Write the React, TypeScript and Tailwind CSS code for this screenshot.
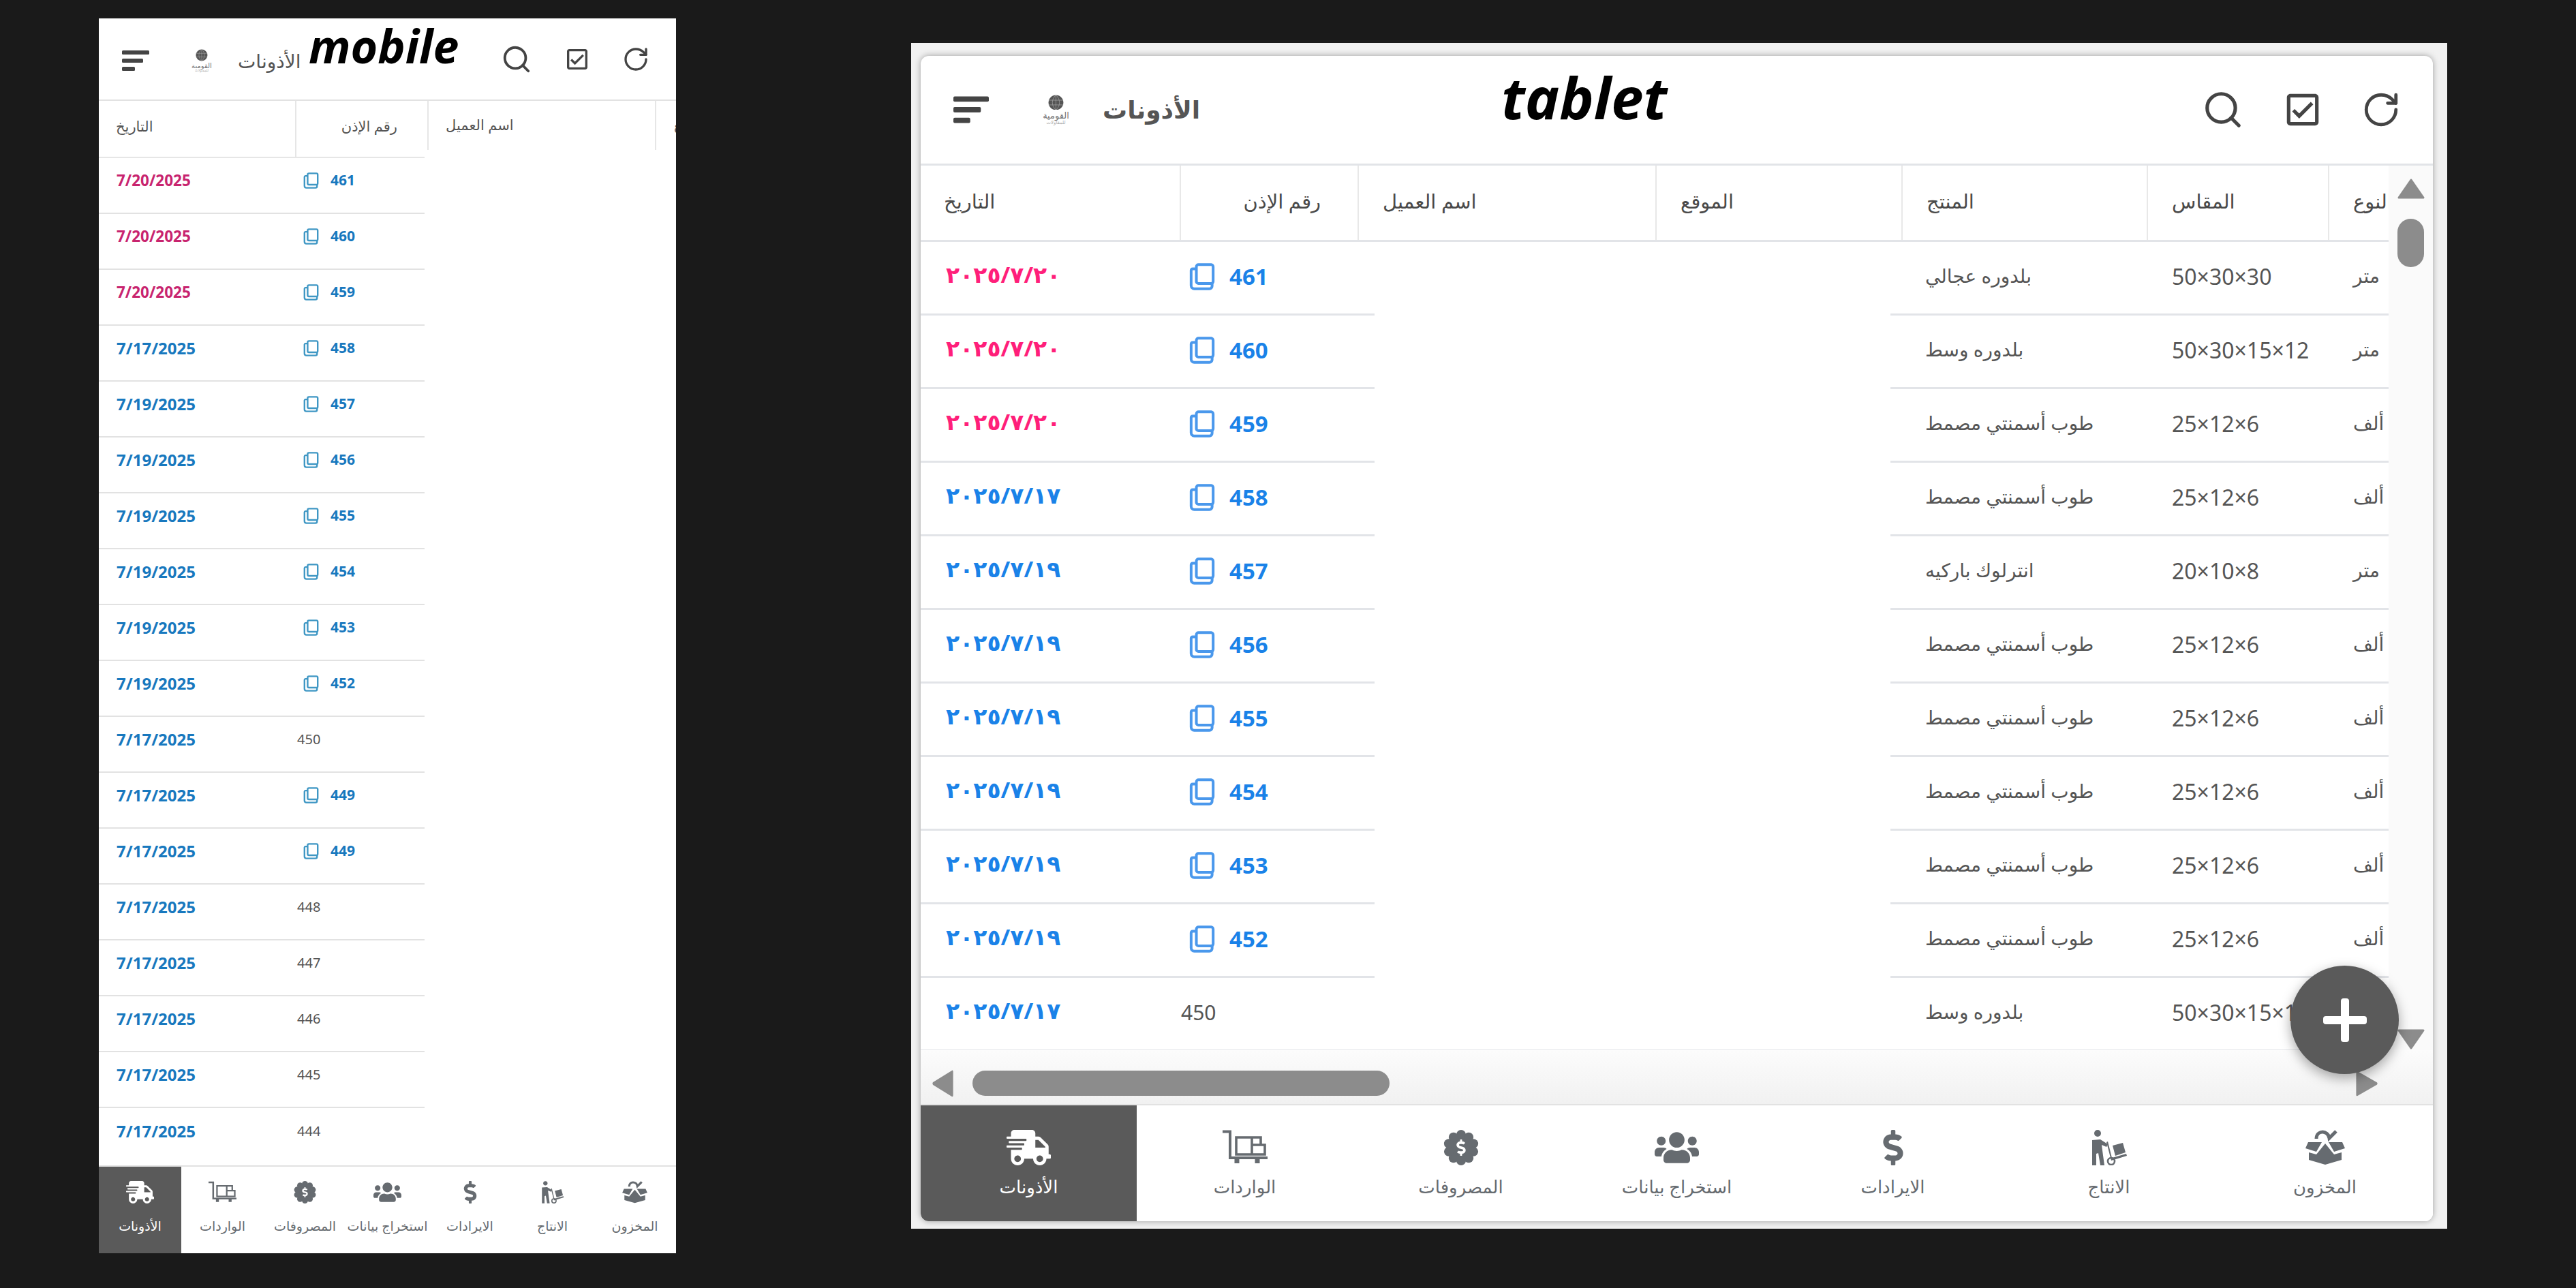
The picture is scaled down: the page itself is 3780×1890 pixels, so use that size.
import React from 'react';
import { RotateCw, Search } from 'lucide-react';
import { FaDollarSign, FaShippingFast, FaUsers } from 'react-icons/fa';
import { MdOutlineCheckBox } from 'react-icons/md';

type Row = { date: string; arDate: string; no: string; copy: boolean; product: string; size: string; unit: string; hot?: boolean };

const solid = 'طوب أسمنتي مصمط';
const mid = 'بلدوره وسط';

const rows: Row[] = [
  { date: '7/20/2025', arDate: '٢٠٢٥/٧/٢٠', no: '461', copy: true, product: 'بلدوره عجالي', size: '50×30×30', unit: 'متر', hot: true },
  { date: '7/20/2025', arDate: '٢٠٢٥/٧/٢٠', no: '460', copy: true, product: mid, size: '50×30×15×12', unit: 'متر', hot: true },
  { date: '7/20/2025', arDate: '٢٠٢٥/٧/٢٠', no: '459', copy: true, product: solid, size: '25×12×6', unit: 'ألف', hot: true },
  { date: '7/17/2025', arDate: '٢٠٢٥/٧/١٧', no: '458', copy: true, product: solid, size: '25×12×6', unit: 'ألف' },
  { date: '7/19/2025', arDate: '٢٠٢٥/٧/١٩', no: '457', copy: true, product: 'انترلوك باركيه', size: '20×10×8', unit: 'متر' },
  { date: '7/19/2025', arDate: '٢٠٢٥/٧/١٩', no: '456', copy: true, product: solid, size: '25×12×6', unit: 'ألف' },
  { date: '7/19/2025', arDate: '٢٠٢٥/٧/١٩', no: '455', copy: true, product: solid, size: '25×12×6', unit: 'ألف' },
  { date: '7/19/2025', arDate: '٢٠٢٥/٧/١٩', no: '454', copy: true, product: solid, size: '25×12×6', unit: 'ألف' },
  { date: '7/19/2025', arDate: '٢٠٢٥/٧/١٩', no: '453', copy: true, product: solid, size: '25×12×6', unit: 'ألف' },
  { date: '7/19/2025', arDate: '٢٠٢٥/٧/١٩', no: '452', copy: true, product: solid, size: '25×12×6', unit: 'ألف' },
  { date: '7/17/2025', arDate: '٢٠٢٥/٧/١٧', no: '450', copy: false, product: mid, size: '50×30×15×12', unit: 'متر' },
];

const mobileExtra: Row[] = [
  { date: '7/17/2025', arDate: '', no: '449', copy: true, product: '', size: '', unit: '' },
  { date: '7/17/2025', arDate: '', no: '449', copy: true, product: '', size: '', unit: '' },
  { date: '7/17/2025', arDate: '', no: '448', copy: false, product: '', size: '', unit: '' },
  { date: '7/17/2025', arDate: '', no: '447', copy: false, product: '', size: '', unit: '' },
  { date: '7/17/2025', arDate: '', no: '446', copy: false, product: '', size: '', unit: '' },
  { date: '7/17/2025', arDate: '', no: '445', copy: false, product: '', size: '', unit: '' },
  { date: '7/17/2025', arDate: '', no: '444', copy: false, product: '', size: '', unit: '' },
];

const CopyIcon = ({ className }: { className: string }) => (
  <svg viewBox="0 0 24 26" fill="none" stroke="currentColor" strokeWidth="2.6" className={className}>
    <rect x="6.5" y="1.5" width="16" height="18" rx="2" />
    <path d="M6.5 5.5H3A1.6 1.6 0 0 0 1.5 7v14.5A3 3 0 0 0 4.5 24.5H19a2.5 2.5 0 0 0 2.5-2.5v-2.5" />
  </svg>
);

const MenuIcon = ({ className }: { className: string }) => (
  <svg viewBox="0 0 40 30" fill="#444" className={className}>
    <rect width="40" height="6" rx="1.5" />
    <rect y="12" width="31" height="6" rx="1.5" />
    <rect y="24" width="19" height="6" rx="1.5" />
  </svg>
);

const Logo = ({ className, textClass, subClass }: { className: string; textClass: string; subClass: string }) => (
  <div className={`flex flex-col items-center ${className}`}>
    <svg viewBox="0 0 20 20" fill="none" className="w-[56%]">
      <circle cx="10" cy="10" r="9.5" fill="#555" />
      <path d="M0.5 7h19M0.5 13h19M10 0.5v19M10 .5c-6 5-6 14 0 19M10 .5c6 5 6 14 0 19" stroke="#bbb" strokeWidth=".5" />
    </svg>
    <span className={`whitespace-nowrap leading-none text-[#777] ${textClass}`}>القومية</span>
    <span className={`whitespace-nowrap leading-none text-[#aaa] ${subClass}`}>للمقاولات</span>
  </div>
);

const CartIcon = ({ className }: { className: string }) => (
  <svg viewBox="0 0 66 52" className={className} fill="none" stroke="currentColor" strokeWidth="3.6">
    <path d="M0 2.5h11v38.5h55" strokeWidth="4" />
    <path d="M20 11h23v25H20zM43 11h13v11H43zM43 22h19v14H43z" />
    <path d="M21 43v6M51 43v6" strokeWidth="7" />
  </svg>
);

const CarryIcon = ({ className }: { className: string }) => (
  <svg viewBox="0 0 54 52" className={className} fill="currentColor">
    <circle cx="10" cy="5" r="5" />
    <path d="M2 15l12-1 11 7-2 4-7-3 1 8 3 22h-6l-3-18-3 1v17H2z" />
    <path d="M32 23l15-4 4 14-15 5z" />
    <path d="M23 18l2-1 6 24 21-6 1 3-23 7z" />
    <circle cx="30" cy="46" r="5" fill="none" stroke="currentColor" strokeWidth="2.6" />
  </svg>
);

const BoxIcon = ({ className }: { className: string }) => (
  <svg viewBox="0 0 60 52" className={className} fill="currentColor">
    <path d="M17 13C17 0 34 0 36 12L46 2" fill="none" stroke="currentColor" strokeWidth="5" />
    <path d="M5 18H25L17 32 1 27zM55 18H35L43 32 59 27z" />
    <path d="M6 33l11 3 13-16 13 16 11-3v11l-24 7-24-7z" />
  </svg>
);

const lobes = Array.from({ length: 10 }, (_, i) => (i * Math.PI) / 5);

const BadgeIcon = ({ className, dollar }: { className: string; dollar: string }) => (
  <div className={`relative flex items-center justify-center ${className}`}>
    <svg viewBox="0 0 52 52" className="h-full w-full" fill="currentColor">
      <circle cx="26" cy="26" r="20" />
      {lobes.map((a) => (
        <circle key={a} cx={26 + 19 * Math.sin(a)} cy={26 - 19 * Math.cos(a)} r="7" />
      ))}
    </svg>
    <FaDollarSign className={`absolute text-white ${dollar}`} />
  </div>
);

const NavIcon = ({ i, compact }: { i: number; compact: boolean }) => {
  if (i === 0) return <FaShippingFast className={compact ? 'h-[33px] w-[41px]' : 'h-[52px] w-[65px]'} />;
  if (i === 1) return <CartIcon className={compact ? 'h-[33px] w-[41px]' : 'h-[52px] w-[66px]'} />;
  if (i === 2) return <BadgeIcon className={compact ? 'h-[33px] w-[33px]' : 'h-[52px] w-[52px]'} dollar={compact ? 'h-[15px] w-[15px]' : 'h-[24px] w-[24px]'} />;
  if (i === 3) return <FaUsers className={compact ? 'h-[33px] w-[41px]' : 'h-[52px] w-[65px]'} />;
  if (i === 4) return <FaDollarSign className={compact ? 'h-[33px] w-[26px]' : 'h-[52px] w-[42px]'} />;
  if (i === 5) return <CarryIcon className={compact ? 'h-[33px] w-[34px]' : 'h-[52px] w-[54px]'} />;
  return <BoxIcon className={compact ? 'h-[33px] w-[39px]' : 'h-[52px] w-[60px]'} />;
};

const navLabels = ['الأذونات', 'الواردات', 'المصروفات', 'استخراج بيانات', 'الايرادات', 'الانتاج', 'المخزون'];

const BottomNav = ({ compact }: { compact: boolean }) => (
  <div className={`flex shrink-0 border-t-2 border-[#e2e2e2] bg-white ${compact ? 'h-[129px]' : 'h-[172px]'}`}>
    {navLabels.map((label, i) => (
      <div
        key={label}
        className={`flex flex-1 flex-col items-center ${compact ? 'gap-[24px] pt-[21px] text-[19px]' : 'gap-[18px] pt-[36px] text-[26px]'} ${i === 0 ? 'bg-[#5a5a5a] text-white' : 'bg-white text-[#666b70]'}`}
      >
        <NavIcon i={i} compact={compact} />
        <span className="whitespace-nowrap leading-none">{label}</span>
      </div>
    ))}
  </div>
);

const MobileView = () => (
  <div className="relative flex h-[1812px] w-[847px] shrink-0 flex-col bg-white">
    <span className="absolute left-[308px] top-0 text-[68px] font-bold italic leading-[80px] text-black">mobile</span>
    <div className="flex h-[121px] shrink-0 items-start justify-between border-b-2 border-[#e2e2e2] pl-[34px] pr-[39px] pt-[37px]">
      <div className="mt-[8px] flex items-center">
        <MenuIcon className="h-[30px] w-[40px]" />
        <Logo className="ml-[61px] w-[32px]" textClass="mt-[1px] text-[10px]" subClass="text-[5px]" />
        <span className="ml-[37px] text-[28px] leading-none text-[#555]">الأذونات</span>
      </div>
      <div className="flex items-center gap-[51px] text-[#444]">
        <Search className="h-[46px] w-[46px]" strokeWidth={2} />
        <MdOutlineCheckBox className="-mx-[5px] h-[40px] w-[40px]" />
        <RotateCw className="h-[40px] w-[40px]" strokeWidth={2} />
      </div>
    </div>
    <div className="flex h-[84px] shrink-0 overflow-hidden text-[21px] text-[#555]">
      <div className="flex w-[290px] shrink-0 items-center border-b-2 border-r-2 border-[#e6e6e6] pb-[6px] pl-[25px]">التاريخ</div>
      <div className="flex w-[188px] shrink-0 items-center justify-end border-b-2 border-[#e6e6e6] pb-[6px] pr-[40px]">رقم الإذن</div>
      <div className="ml-[4px] flex h-[72px] w-[336px] shrink-0 items-center border-x-2 border-[#e6e6e6] pl-[25px]">اسم العميل</div>
      <div className="flex h-[72px] shrink-0 items-center pl-[26px]">الموقع</div>
    </div>
    <div className="flex-1 overflow-hidden">
      {[...rows, ...mobileExtra].map((r, i) => (
        <div key={i} className={`flex h-[82px] w-[478px] pb-[14px] ${i === 17 ? '' : 'border-b-2 border-[#e2e2e2]'}`}>
          <div
            className={`flex w-[290px] shrink-0 items-center pl-[26px] font-bold ${r.hot ? 'text-[22.5px] text-[#c8246f]' : 'text-[24px] text-[#1878be]'}`}
          >
            {r.date}
          </div>
          {r.copy ? (
            <div className="flex items-center pl-[10px] text-[21px] font-bold text-[#1878be]">
              <CopyIcon className="mr-[17px] h-[24px] w-[23px] text-[#3f97c4]" />
              {r.no}
            </div>
          ) : (
            <div className="flex items-center pl-[1px] text-[20px] text-[#555]">{r.no}</div>
          )}
        </div>
      ))}
    </div>
    <BottomNav compact />
  </div>
);

const tabletCols = ['w-[382px]', 'w-[261px]', 'w-[437px]', 'w-[361px]', 'w-[360px]', 'w-[266px]', 'w-[87px]'];
const tabletHeads = ['التاريخ', 'رقم الإذن', 'اسم العميل', 'الموقع', 'المنتج', 'المقاس', 'النوع'];

const Arrow = ({ d, className }: { d: string; className: string }) => (
  <svg viewBox="0 0 40 30" preserveAspectRatio="none" fill="#8c8c8c" stroke="#8c8c8c" strokeWidth="3" strokeLinejoin="round" className={className}>
    <path d={d} />
  </svg>
);

const TabletView = () => (
  <div className="relative ml-[345px] mt-[36px] h-[1740px] w-[2254px] shrink-0 bg-[#f1f1f1] pb-[11px] pl-[14px] pr-[21px] pt-[19px]">
    <div className="flex h-full flex-col overflow-hidden rounded-[12px] bg-white shadow-[0_0_10px_rgba(0,0,0,0.35)]">
      <div className="relative flex h-[161px] shrink-0 items-center justify-between border-b-[3px] border-[#e2e4e8] pl-[48px] pr-[47px]">
        <span className="absolute left-[852px] top-[15px] text-[85px] font-bold italic leading-[90px] text-black">tablet</span>
        <div className="flex items-center">
          <MenuIcon className="h-[40px] w-[52px]" />
          <Logo className="ml-[78px] w-[41px]" textClass="mt-[2px] text-[13px]" subClass="text-[7px]" />
          <span className="ml-[48px] text-[36px] font-semibold leading-none text-[#555]">الأذونات</span>
        </div>
        <div className="flex items-center gap-[61px] text-[#444]">
          <Search className="h-[62px] w-[62px]" strokeWidth={2} />
          <MdOutlineCheckBox className="-mx-[6px] h-[62px] w-[62px]" />
          <RotateCw className="h-[58px] w-[58px]" strokeWidth={2} />
        </div>
      </div>
      <div className="flex min-h-0 flex-1">
        <div className="w-[2154px] shrink-0 overflow-hidden">
          <div className="flex h-[112px] border-b-[3px] border-[#e2e4e8] text-[29px] text-[#4a4a4a]">
            {tabletHeads.map((h, i) => (
              <div
                key={h}
                className={`flex shrink-0 items-center overflow-hidden whitespace-nowrap pb-[6px] ${tabletCols[i]} ${i === 6 ? 'pl-[35px]' : 'border-r-2 border-[#e8e8e8]'} ${i === 1 ? 'justify-end pr-[54px]' : i === 0 ? 'pl-[34px]' : 'pl-[35px]'}`}
              >
                {h}
              </div>
            ))}
          </div>
          {rows.map((r, i) => (
            <div key={r.no} className={`flex h-[108px] ${i === 10 ? 'border-b-[3px] border-[#e2e4e8]' : ''}`}>
              <div className={`flex w-[666px] shrink-0 items-center pb-[4px] ${i === 10 ? '' : 'border-b-[3px] border-[#e2e4e8]'}`}>
                <div className={`w-[382px] pb-[6px] pl-[37px] text-[33px] font-bold tracking-[1px] ${r.hot ? 'text-[#ff1f7a]' : 'text-[#1a82e8]'}`}>
                  {r.arDate}
                </div>
                {r.copy ? (
                  <div className="flex items-center pl-[12px] text-[33px] font-bold text-[#1a82e8]">
                    <CopyIcon className="mr-[21px] h-[40px] w-[38px] text-[#4a98ec]" />
                    {r.no}
                  </div>
                ) : (
                  <div className="text-[30px] text-[#555]">{r.no}</div>
                )}
              </div>
              <div className="w-[757px] shrink-0" />
              <div className={`flex flex-1 items-center pb-[4px] text-[#555] ${i === 10 ? '' : 'border-b-[3px] border-[#e2e4e8]'}`}>
                <div className="w-[413px] shrink-0 whitespace-nowrap pb-[4px] pl-[51px] text-[28px]">{r.product}</div>
                <div className="w-[266px] shrink-0 whitespace-nowrap text-[32px]">{r.size}</div>
                <div className="pb-[4px] text-[28px]">{r.unit}</div>
              </div>
            </div>
          ))}
        </div>
        <div className="flex w-[65px] flex-col items-center bg-[#fafafa] pb-[1px] pt-[19px]">
          <Arrow d="M20 2L38 28H2Z" className="h-[30px] w-[40px]" />
          <div className="mt-[29px] h-[71px] w-[39px] rounded-full bg-[#8c8c8c]" />
          <Arrow d="M2 2H38L20 28Z" className="mt-auto h-[30px] w-[40px]" />
        </div>
      </div>
      <div className="flex h-[79px] shrink-0 items-center bg-gradient-to-b from-[#fcfcfc] to-[#f1f1f1] pl-[17px] pr-[81px] pt-[18px]">
        <Arrow d="M38 2V28L2 15Z" className="h-[40px] w-[31px]" />
        <div className="ml-[28px] h-[37px] w-[612px] rounded-full bg-[#8c8c8c]" />
        <Arrow d="M2 2V28L38 15Z" className="ml-auto h-[38px] w-[32px]" />
      </div>
      <BottomNav compact={false} />
    </div>
    <button className="absolute left-[2024px] top-[1354px] flex h-[159px] w-[159px] items-center justify-center rounded-full bg-[#5a5a5a] shadow-[0_6px_18px_rgba(0,0,0,0.35)]">
      <svg viewBox="0 0 64 64" className="h-[64px] w-[64px]" fill="white">
        <rect x="26" width="12" height="64" rx="4" />
        <rect y="26" width="64" height="12" rx="4" />
      </svg>
    </button>
  </div>
);

const App: React.FC = () => {
  return (
    <div className="flex h-[1890px] w-[3780px] items-start overflow-hidden bg-[#1a1a1a] pl-[145px] pt-[27px] font-['Noto_Sans','DejaVu_Sans',sans-serif]">
      <MobileView />
      <TabletView />
    </div>
  );
};

export default App;
